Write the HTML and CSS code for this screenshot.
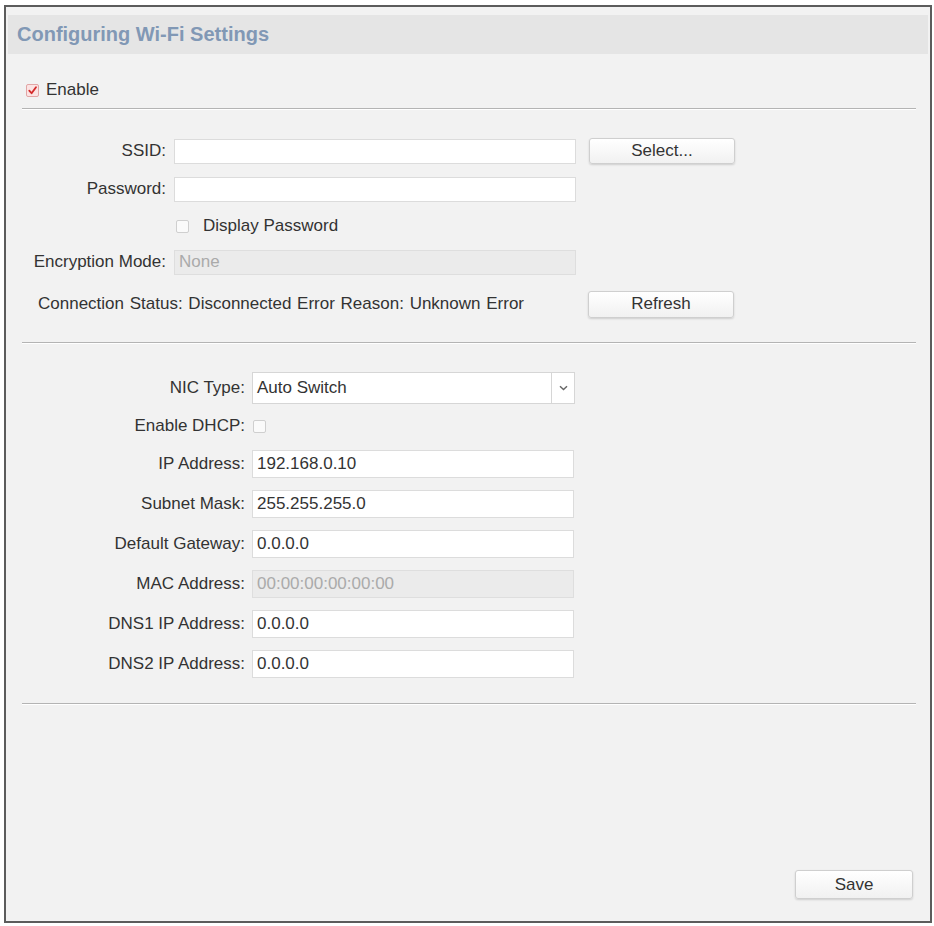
FILE: index.html
```html
<!DOCTYPE html>
<html lang="en">
<head>
    <meta charset="UTF-8">
    <meta name="viewport" content="width=device-width, initial-scale=1.0">
    <title>Configuring Wi-Fi Settings</title>
    <link rel="stylesheet" href="styles.css">
</head>
<body>
    <div class="frame">
        <div class="header">Configuring Wi-Fi Settings</div>

        <div class="content">
            <div class="enable-row">
                <span class="check checked">
                    <svg width="11" height="11" viewBox="0 0 12 12"><path d="M2.5 6.2 L5 9 L9.8 2.4" fill="none" stroke="#d42a2a" stroke-width="2" stroke-linecap="round" stroke-linejoin="round"/></svg>
                </span>
                <span>Enable</span>
            </div>
            <div class="divider"></div>

            <div class="section wifi">
                <div class="row r38">
                    <label class="lbl">SSID:</label>
                    <input class="field" type="text" value="">
                    <button class="btn">Select...</button>
                </div>
                <div class="row r38">
                    <label class="lbl">Password:</label>
                    <input class="field" type="password" value="">
                </div>
                <div class="row r36">
                    <span class="lbl"></span>
                    <span class="check pad"></span>
                    <span class="check-text">Display Password</span>
                </div>
                <div class="row r36">
                    <label class="lbl">Encryption Mode:</label>
                    <input class="field disabled" type="text" value="None" disabled>
                </div>
                <div class="row r40 status">
                    <span class="status-text">Connection Status: Disconnected Error Reason: Unknown Error</span>
                    <button class="btn tall">Refresh</button>
                </div>
            </div>
            <div class="divider"></div>

            <div class="section net">
                <div class="row r40">
                    <label class="lbl">NIC Type:</label>
                    <div class="dropdown">
                        <span class="dropdown-value">Auto Switch</span>
                        <span class="dropdown-arrow">
                            <svg width="9" height="6" viewBox="0 0 9 6"><path d="M1 1.2 L4.5 4.6 L8 1.2" fill="none" stroke="#666" stroke-width="1.4"/></svg>
                        </span>
                    </div>
                </div>
                <div class="row r36">
                    <label class="lbl">Enable DHCP:</label>
                    <span class="check dhcp"></span>
                </div>
                <div class="row r40">
                    <label class="lbl">IP Address:</label>
                    <input class="field" type="text" value="192.168.0.10">
                </div>
                <div class="row r40">
                    <label class="lbl">Subnet Mask:</label>
                    <input class="field" type="text" value="255.255.255.0">
                </div>
                <div class="row r40">
                    <label class="lbl">Default Gateway:</label>
                    <input class="field" type="text" value="0.0.0.0">
                </div>
                <div class="row r40">
                    <label class="lbl">MAC Address:</label>
                    <input class="field disabled" type="text" value="00:00:00:00:00:00" disabled>
                </div>
                <div class="row r40">
                    <label class="lbl">DNS1 IP Address:</label>
                    <input class="field" type="text" value="0.0.0.0">
                </div>
                <div class="row r40">
                    <label class="lbl">DNS2 IP Address:</label>
                    <input class="field" type="text" value="0.0.0.0">
                </div>
            </div>
            <div class="divider"></div>
        </div>

        <div class="footer">
            <button class="btn save">Save</button>
        </div>
    </div>
</body>
</html>
```

FILE: styles.css
```css
body { margin: 0; background-color: #fff; font-family: "Liberation Sans", Arial, sans-serif; font-size: 17px; color: #333; }
.frame {
    margin: 5px 2px 0 4px;
    height: 918px;
    box-sizing: border-box;
    border: 2px solid #5c5c5c;
    background-color: #f2f2f2;
    display: flex;
    flex-direction: column;
}
.header {
    margin: 8px 2px 0 2px;
    height: 39px;
    padding-left: 9px;
    background-color: #e5e5e5;
    color: #8198b5;
    font-size: 20px;
    font-weight: bold;
    display: flex;
    align-items: center;
}
.content { margin: 0 14px 0 16px; }
.enable-row { margin-top: 18px; height: 36px; padding-left: 4px; display: flex; align-items: center; gap: 7px; }
.divider { border-top: 1px solid #b4b4b4; border-bottom: 1px solid #fff; }

.check {
    width: 13px;
    height: 13px;
    box-sizing: border-box;
    border: 1px solid #cfcfcf;
    border-radius: 2px;
    background-color: #fafafa;
    display: inline-flex;
    align-items: center;
    justify-content: center;
    flex-shrink: 0;
}
.check.checked { border-color: #e2a5a5; background-color: #fbe3e3; }
.check.pad { margin-left: 2px; }
.check.dhcp { margin-left: 1px; }
.check-text { margin-left: 14px; }

.section.wifi { margin-top: 22px; margin-bottom: 18px; }
.section.net { margin-top: 24px; margin-bottom: 19px; }
.row { display: flex; align-items: center; }
.r36 { height: 36px; }
.r38 { height: 38px; }
.r40 { height: 40px; }
.lbl { text-align: right; flex-shrink: 0; }
.wifi .lbl { width: 144px; margin-right: 8px; }
.net .lbl { width: 223px; margin-right: 7px; }

.field {
    box-sizing: border-box;
    height: 25px;
    border: 1px solid #dcdcdc;
    background-color: #fff;
    font-family: inherit;
    font-size: 17px;
    color: #333;
    padding: 0 4px;
    outline: none;
}
.wifi .field { width: 402px; }
.net .field { width: 322px; height: 28px; }
.field.disabled { background-color: #ebebeb; color: #aaa; border-color: #dedede; }

.btn {
    box-sizing: border-box;
    width: 146px;
    height: 26px;
    margin-left: 13px;
    border: 1px solid #cfcfcf;
    border-radius: 3px;
    background: linear-gradient(#ffffff, #f1f1f1);
    box-shadow: 0 1px 2px rgba(0,0,0,0.15);
    font-family: inherit;
    font-size: 17px;
    color: #333;
}
.btn.tall { height: 27px; margin-left: 0; }
.status { margin-top: 4px; }
.status-text { width: 566px; padding-left: 16px; box-sizing: border-box; flex-shrink: 0; word-spacing: 1px; }

.dropdown {
    box-sizing: border-box;
    width: 323px;
    height: 32px;
    border: 1px solid #d6d6d6;
    background-color: #fff;
    display: flex;
    align-items: center;
}
.dropdown-value { flex: 1; padding-left: 4px; }
.dropdown-arrow { width: 22px; height: 100%; border-left: 1px solid #d6d6d6; display: flex; align-items: center; justify-content: center; }

.footer { margin-top: auto; padding: 0 17px 22px 0; display: flex; justify-content: flex-end; }
.btn.save { width: 118px; height: 29px; margin-left: 0; }
```
